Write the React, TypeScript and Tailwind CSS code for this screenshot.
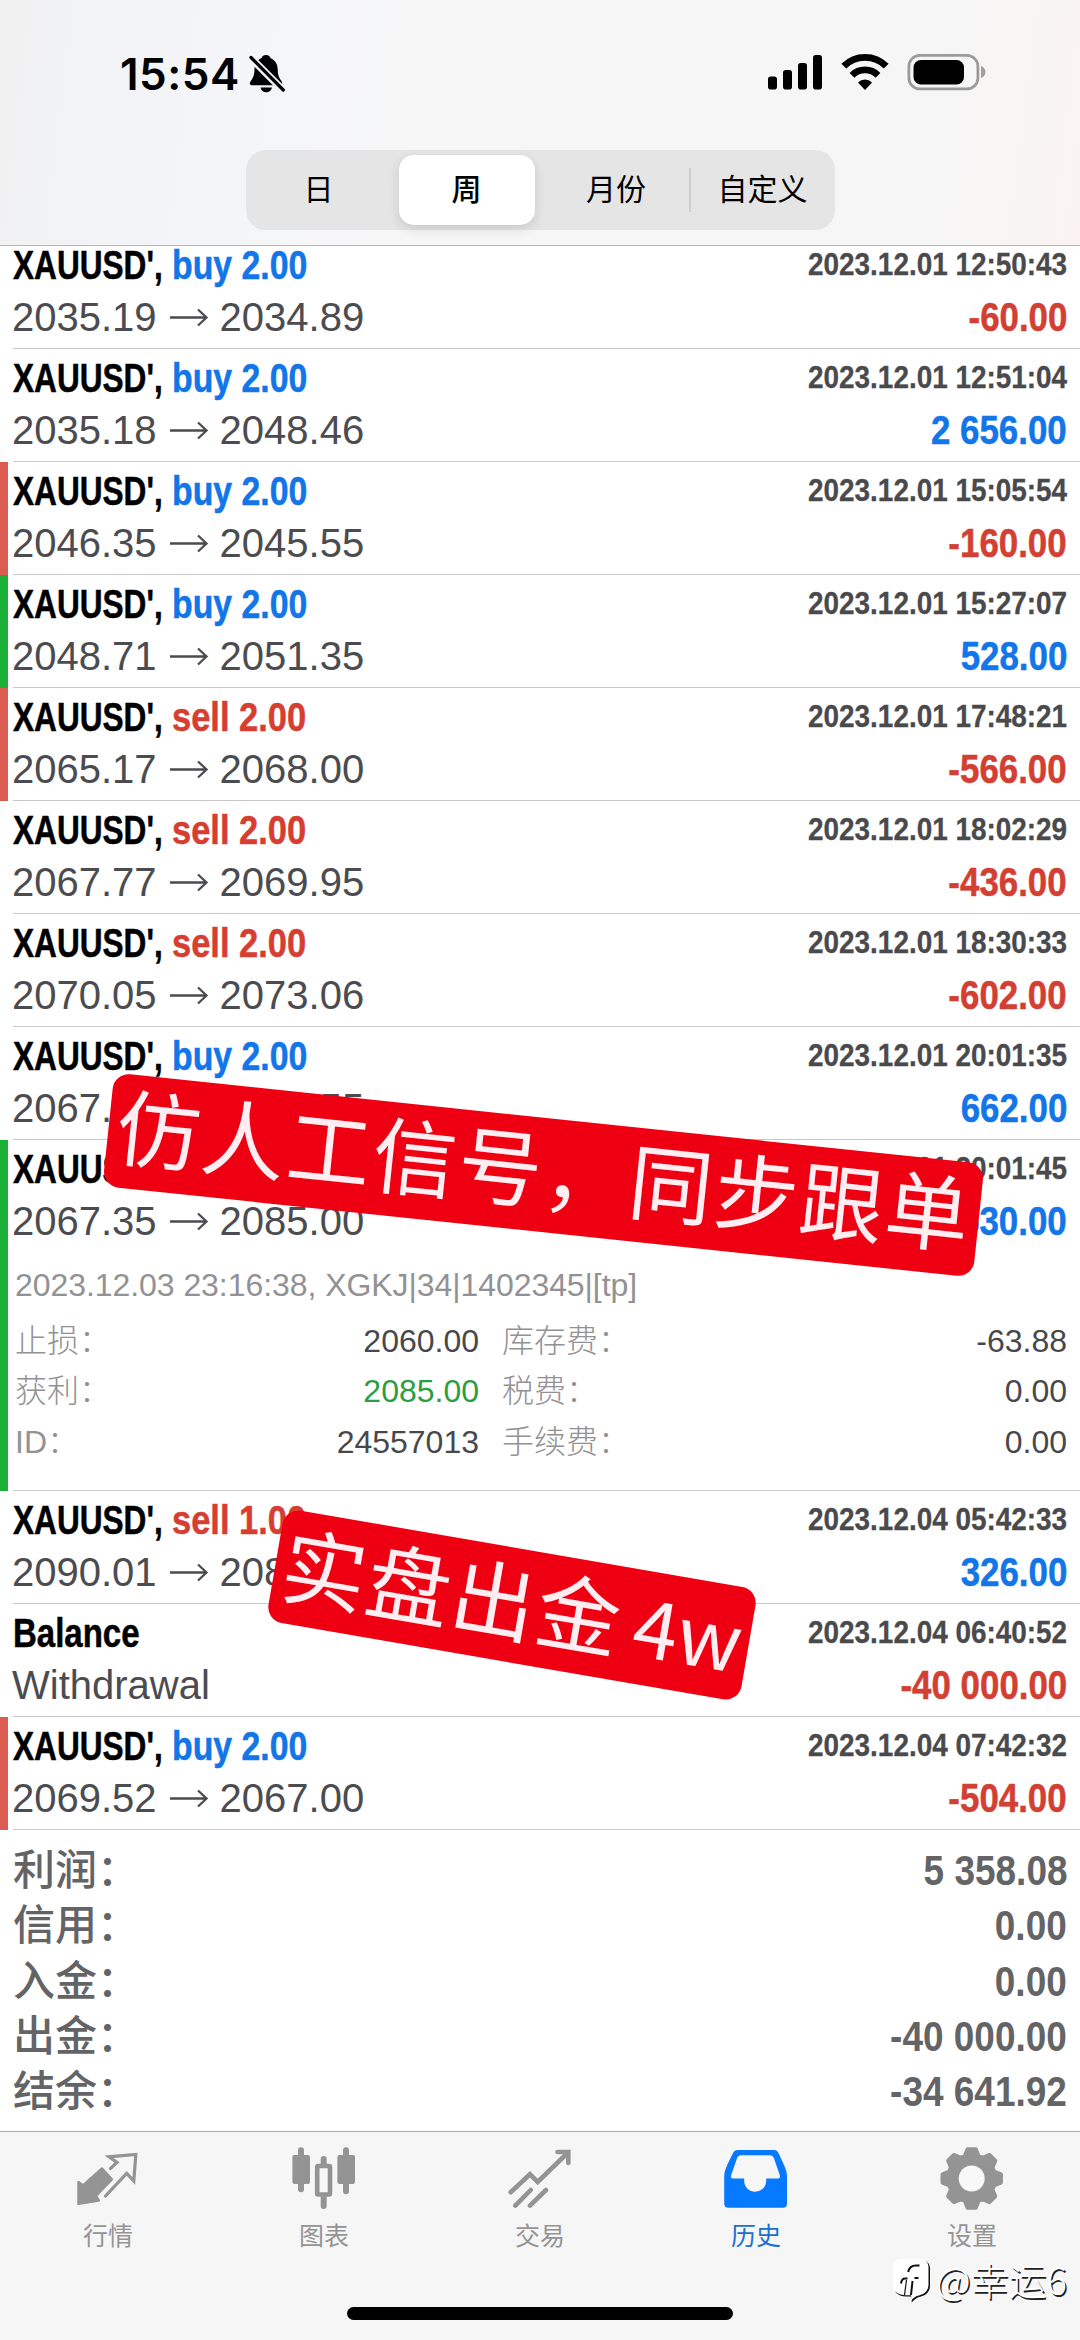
import React from "react";
import clsx from "clsx";

type Deal = {
  symbol: string;
  side?: string;
  from: string;
  to?: string;
  time: string;
  profit: string;
  bar?: "red" | "green";
  open?: boolean;
};

const deals: Deal[] = [
  { symbol: "XAUUSD',", side: "buy 2.00", from: "2035.19", to: "2034.89", time: "2023.12.01 12:50:43", profit: "-60.00" },
  { symbol: "XAUUSD',", side: "buy 2.00", from: "2035.18", to: "2048.46", time: "2023.12.01 12:51:04", profit: "2 656.00" },
  { symbol: "XAUUSD',", side: "buy 2.00", from: "2046.35", to: "2045.55", time: "2023.12.01 15:05:54", profit: "-160.00", bar: "red" },
  { symbol: "XAUUSD',", side: "buy 2.00", from: "2048.71", to: "2051.35", time: "2023.12.01 15:27:07", profit: "528.00", bar: "green" },
  { symbol: "XAUUSD',", side: "sell 2.00", from: "2065.17", to: "2068.00", time: "2023.12.01 17:48:21", profit: "-566.00", bar: "red" },
  { symbol: "XAUUSD',", side: "sell 2.00", from: "2067.77", to: "2069.95", time: "2023.12.01 18:02:29", profit: "-436.00" },
  { symbol: "XAUUSD',", side: "sell 2.00", from: "2070.05", to: "2073.06", time: "2023.12.01 18:30:33", profit: "-602.00" },
  { symbol: "XAUUSD',", side: "buy 2.00", from: "2067.24", to: "2070.55", time: "2023.12.01 20:01:35", profit: "662.00" },
  { symbol: "XAUUSD',", side: "buy 2.00", from: "2067.35", to: "2085.00", time: "2023.12.01 20:01:45", profit: "3 530.00", bar: "green", open: true },
  { symbol: "XAUUSD',", side: "sell 1.00", from: "2090.01", to: "2086.75", time: "2023.12.04 05:42:33", profit: "326.00" },
  { symbol: "Balance", from: "Withdrawal", time: "2023.12.04 06:40:52", profit: "-40 000.00" },
  { symbol: "XAUUSD',", side: "buy 2.00", from: "2069.52", to: "2067.00", time: "2023.12.04 07:42:32", profit: "-504.00", bar: "red" },
];

const details = [
  ["止损：", "2060.00", "库存费：", "-63.88"],
  ["获利：", "2085.00", "税费：", "0.00"],
  ["ID：", "24557013", "手续费：", "0.00"],
];

const totals = [
  ["利润：", "5 358.08"],
  ["信用：", "0.00"],
  ["入金：", "0.00"],
  ["出金：", "-40 000.00"],
  ["结余：", "-34 641.92"],
];

const StatusBar = () => (
  <div className="flex h-[150px] items-start justify-between pt-[53px] pl-[120px] pr-[93px]">
    <div className="flex">
      <span className="w-[128px] whitespace-nowrap font-['Inter'] text-[44px] font-semibold leading-[42px] tracking-[0.500px] text-black">
        15:54
      </span>
      <svg className="h-[41px] w-[38px]" viewBox="0 0 38 41">
        <path
          d="M18 2c-2.600 0-4 1.600-4.600 3.200C9 7 6.600 11 6.500 16c-.1 6-1.300 8.500-3.400 11.500C2 29 1.600 30 2 31c.4.900 1 1.200 2.200 1.200h27.500c1.300 0 2-.3 2.400-1.200.4-1 0-2-1-3.500-2.100-3-3.300-5.500-3.400-11.500-.1-5-2.600-9-7-10.800C22 3.600 20.600 2 18 2z"
          fill="#000"
        />
        <path d="M12.500 34.500h11.500c-.6 3-2.800 4.800-5.700 4.800s-5.200-1.800-5.800-4.800z" fill="#000" />
        <path d="M2.500 4.500 35.300 37.300" stroke="#f3f4f6" strokeWidth="7.500" />
        <path d="M3 4.500 35.300 37" stroke="#000" strokeWidth="3.200" strokeLinecap="round" />
      </svg>
    </div>
    <div className="flex items-start">
      <svg className="h-[38px] w-[56px]" viewBox="0 0 56 38">
        <rect x="1" y="23.500" width="9" height="13" rx="2.800" />
        <rect x="16" y="17" width="9" height="19.500" rx="2.800" />
        <rect x="31" y="10" width="9" height="26.500" rx="2.800" />
        <rect x="46" y="2" width="9" height="34.500" rx="2.800" />
      </svg>
      <svg className="ml-[17px] h-[38px] w-[50px]" viewBox="0 0 50 38" fill="none" stroke="#000">
        <path d="M3.800 13.200a30 30 0 0 1 42.400 0" strokeWidth="6.800" />
        <path d="M12 22.300a18.400 18.400 0 0 1 26 0" strokeWidth="6.800" />
        <path d="M25 37l-7-7.600a10 10 0 0 1 14 0z" fill="#000" stroke="none" />
      </svg>
      <svg className="ml-[17px] h-[38px] w-[80px]" viewBox="0 0 80 38">
        <rect x="1.900" y="2.400" width="69" height="33.500" rx="11" fill="none" stroke="#9b9b9c" strokeWidth="2.800" />
        <rect x="6.500" y="7" width="50.500" height="24.500" rx="7.500" />
        <path d="M74 13c3 1.200 4.500 3.400 4.500 6s-1.500 4.800-4.500 6z" fill="#a0a0a1" />
      </svg>
    </div>
  </div>
);

const SegmentedControl = () => (
  <div className="mx-auto flex h-[80px] w-[589px] items-center rounded-[20px] bg-[#e5e5e6] text-[30px] leading-none text-black">
    <div className="w-[146px] text-center">日</div>
    <div className="ml-[7px] flex h-[70px] w-[136px] items-center justify-center rounded-[15px] bg-white font-medium shadow-[0_4px_12px_rgba(0,0,0,0.12)]">
      周
    </div>
    <div className="ml-[10px] w-[143px] text-center">月份</div>
    <div className="ml-[1px] h-[44px] w-[2px] bg-[#cfcfd1]" />
    <div className="w-[144px] text-center">自定义</div>
  </div>
);

const Arrow = () => (
  <svg className="ml-[12px] mr-[11px] mt-[9px] h-[24px] w-[40px]" viewBox="0 0 40 24" fill="none" stroke="#4c4c50" strokeWidth="2.300">
    <path d="M1 11.500h36M29 3.500l8.500 8-8.500 8" />
  </svg>
);

const DealRow = ({ deal }: { deal: Deal }) => (
  <div className={clsx("flex", deal.open ? "h-[351px]" : "h-[113px]")}>
    <div
      className={clsx(
        "w-[8px] shrink-0",
        deal.bar === "red" && "bg-[#dc5c52]",
        deal.bar === "green" && "bg-[#1bb136]"
      )}
    />
    <div className="ml-[5px] flex-1 border-b-[1.500px] border-[#c9c9cb] pr-[13px] pt-[9px]">
      <div className="flex h-[52px] justify-between text-[40px] font-bold leading-[40px]">
        <div className="flex whitespace-pre [-webkit-text-stroke:0.500px]">
          {deal.side ? (
            <>
              <span className="w-[159px] origin-left scale-x-[0.790] text-black">{deal.symbol}</span>
              <span
                className={clsx(
                  "origin-left",
                  deal.side.startsWith("buy") ? "scale-x-[0.845] text-[#1276e8]" : "scale-x-[0.862] text-[#d63e31]"
                )}
              >
                {deal.side}
              </span>
            </>
          ) : (
            <span className="origin-left scale-x-[0.825] text-black">{deal.symbol}</span>
          )}
        </div>
        <span className="-mt-[1px] origin-right scale-x-[0.872] whitespace-pre text-[32px] text-[#4a4a4d] [-webkit-text-stroke:0.300px]">
          {deal.time}
        </span>
      </div>
      <div className="flex h-[41px] justify-between text-[40px] leading-[40px]">
        <div className="-ml-[1px] flex text-[#4c4c50]">
          <span>{deal.from}</span>
          {deal.to && (
            <>
              <Arrow />
              <span>{deal.to}</span>
            </>
          )}
        </div>
        <span
          className={clsx(
            "origin-right scale-x-[0.872] whitespace-pre font-bold [-webkit-text-stroke:0.500px]",
            deal.profit.startsWith("-") ? "text-[#d33f32]" : "text-[#1276e8]"
          )}
        >
          {deal.profit}
        </span>
      </div>
      {deal.open && (
        <div className="pl-[2px] text-[32px] leading-[50px] text-[#929294]">
          <div className="mt-[18px] h-[56px] whitespace-pre tracking-[-0.060px]">2023.12.03 23:16:38, XGKJ|34|1402345|[tp]</div>
          {details.map(([label, value, label2, value2], i) => (
            <div key={label} className="flex h-[50.400px] justify-between">
              <div className="flex w-[464px] justify-between">
                <span className="font-light">{label}</span>
                <span className={i === 1 ? "text-[#2b9e42]" : "text-[#48484b]"}>{value}</span>
              </div>
              <div className="flex w-[565px] justify-between">
                <span className="font-light">{label2}</span>
                <span className="text-[#48484b]">{value2}</span>
              </div>
            </div>
          ))}
        </div>
      )}
    </div>
  </div>
);

const Totals = () => (
  <div className="h-[301px] pl-[13px] pr-[13px] pt-[13px] text-[42px] leading-[55px] text-[#646466]">
    {totals.map(([label, value]) => (
      <div key={label} className="flex h-[55.300px] justify-between">
        <span className="font-medium">{label}</span>
        <span className="origin-right scale-x-[0.880] whitespace-pre font-bold">{value}</span>
      </div>
    ))}
  </div>
);

// eight rounded teeth around the settings wheel
const gearPoints = Array.from({ length: 8 }, (_, i) => i * 45)
  .flatMap((a) => [
    [a - 17, 23.5],
    [a - 8, 29.5],
    [a + 8, 29.5],
    [a + 17, 23.5],
  ])
  .map(([a, r]) => {
    const t = (a * Math.PI) / 180;
    return `${(31.7 + r * Math.cos(t)).toFixed(2)},${(32.5 + r * Math.sin(t)).toFixed(2)}`;
  })
  .join(" ");

const tabs = [
  {
    label: "行情",
    icon: (
      <g stroke="currentColor" strokeLinejoin="round" strokeLinecap="round">
        <path d="M26 22.500 35.800 33.300 20 50 22.800 54.500 2.500 57.800V36l4.500 3.500z" fill="currentColor" strokeWidth="2.500" />
        <path d="M34.500 22.500 41 16.500 33 10.800 59.800 8.500 57.800 35 50.700 27.300 29.500 50" fill="none" strokeWidth="3.200" strokeLinejoin="miter" />
      </g>
    ),
  },
  {
    label: "图表",
    icon: (
      <g fill="currentColor">
        <rect x="6" y="1.300" width="6" height="45" rx="3" />
        <rect x=".4" y="9" width="17.600" height="29" rx="2" />
        <rect x="28.700" y="10" width="6" height="53" rx="3" />
        <rect x="25.200" y="20" width="12.800" height="28.500" rx="1" fill="#f7f7f7" stroke="currentColor" strokeWidth="4.600" />
        <rect x="51" y="1.300" width="6" height="47" rx="3" />
        <rect x="45.400" y="9" width="17.600" height="29" rx="2" />
      </g>
    ),
  },
  {
    label: "交易",
    icon: (
      <g fill="none" stroke="currentColor" strokeWidth="4.600" strokeLinecap="round">
        <path d="M2.700 46.300 22 28.300 29.700 36 59 7.500M7.300 59.700 22.700 44M22 59.700 38 44" />
        <path d="M49.500 6H60.300V17" />
      </g>
    ),
  },
  {
    label: "历史",
    active: true,
    icon: (
      <path
        fill="currentColor"
        fillRule="evenodd"
        d="M13.500 4h36.500c2.200 0 3.500 1 4.500 3l5.500 12c2 4.500 3 7.500 3 12v26.700c0 2.500-1.500 4-4 4H4.200c-2.500 0-4-1.500-4-4V31c0-4.500 1-7.500 3-12L9 7c1-2 2.300-3 4.500-3zM17 9.200c-2 0-3 .8-3.800 2.600L7.200 29c-.7 2-.2 3.400 1.500 3.400h11.500v2.500c0 6 5 10.800 11 10.800s11-4.800 11-10.800v-2.500h12c1.700 0 2.200-1.400 1.500-3.400L49.800 11.800c-.8-1.800-1.800-2.600-3.800-2.600z"
      />
    ),
  },
  {
    label: "设置",
    icon: (
      <>
        <polygon points={gearPoints} fill="currentColor" stroke="currentColor" strokeWidth="4" strokeLinejoin="round" />
        <circle cx="31.700" cy="32.500" r="13" fill="#f8f8f8" />
      </>
    ),
  },
];

const TabBar = () => (
  <div className="relative h-[209px] border-t-[1.500px] border-[#a9a9ab] bg-[#f6f6f7]">
    <div className="grid grid-cols-5 pt-[14px]">
      {tabs.map((tab) => (
        <div key={tab.label} className={clsx("flex flex-col items-center", tab.active ? "text-[#057aff]" : "text-[#949495]")}>
          <svg className="h-[64px] w-[64px]" viewBox="0 0 64 64">
            {tab.icon}
          </svg>
          <span className={clsx("mt-[12px] text-[25px] leading-[28px]", tab.active && "text-[#1a6fd0]")}>{tab.label}</span>
        </div>
      ))}
    </div>
    <div className="absolute bottom-[20px] left-[347px] h-[13px] w-[386px] rounded-full bg-black" />
    <div className="absolute left-[893px] top-[126px] flex items-center text-white">
      <svg className="h-[46px] w-[38px]" viewBox="0 0 38 46">
        <path d="M9 2.500h20c5 0 8 3 8 8V27c0 6-3 10-9 11.500-4 1-6 2.500-9.500 6 .5-2 .5-4 0-6H13C5 38.500.800 34 .800 27V10.500c0-5 3.200-8 8.200-8z" fill="#111" />
        <path d="M8.500 1.200h19c5 0 8 3 8 8V26c0 6-3 9.700-9 11.200-4 1-5.500 2.300-8.500 5.300.5-2 .5-3.600 0-5.300h-5.500C4.500 37.200-.500 33-.500 26V9.200c0-5 4-8 9-8z" fill="#fff" />
        <path d="M26.500 7.500h-3.500c-4.500 0-7 2.500-7.800 6.500M8 25.500c.5-3.500 1.500-5 4-5h2.500M21.500 20h4M18 37l1.500-14" fill="none" stroke="#111" strokeWidth="2" />
        <path d="M11.500 37 13.500 22" fill="none" stroke="#111" strokeWidth="1.200" />
      </svg>
      <span className="-mt-[5px] ml-[5px] whitespace-nowrap font-['Noto_Sans_CJK_SC'] text-[38px] font-light leading-[46px] [text-shadow:1.500px_1.500px_0.500px_#222]">
        @幸运6
      </span>
    </div>
  </div>
);

export default function App() {
  return (
    <div className="relative h-[2340px] w-[1080px] overflow-hidden bg-white font-['Liberation_Sans','Noto_Sans_CJK_SC',sans-serif]">
      <header className="relative z-10 h-[246px] border-b-[1.500px] border-[#b9b5b8] bg-[linear-gradient(97deg,#f1f1f2_0%,#f3f5f8_20%,#f6f6f7_36%,#f6f6f6_85%,#faf3f2_100%)]">
        <StatusBar />
        <SegmentedControl />
      </header>
      <main className="-mt-[10px]">
        {deals.map((deal) => (
          <DealRow key={deal.time} deal={deal} />
        ))}
        <Totals />
      </main>
      <TabBar />

      {/* stickers over the list */}
      <div className="absolute left-[106px] top-[1118px] flex h-[114px] w-[875px] rotate-6 items-center justify-center whitespace-nowrap rounded-[16px] bg-[#ee0012] pb-[16px] font-['Noto_Sans_CJK_SC'] text-[84px] leading-none tracking-[1.900px] text-[#ffeef1]">
        仿人工信号，同步跟单
      </div>
      <div className="absolute left-[272px] top-[1548px] flex h-[114px] w-[480px] rotate-[9.800deg] items-center justify-center whitespace-nowrap rounded-[16px] bg-[#ee0012] pb-[13px] font-['Noto_Sans_CJK_SC'] text-[84px] leading-none tracking-[1.900px] text-[#ffeef1]">
        <span>实盘出金</span>
        <span className="ml-[13px] text-[80px] tracking-normal">4w</span>
      </div>
    </div>
  );
}
